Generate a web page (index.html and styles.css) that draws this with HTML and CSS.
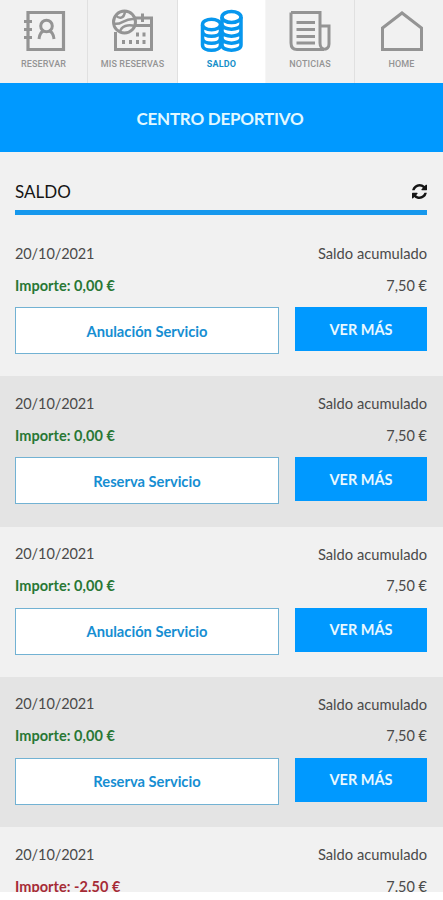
FILE: index.html
```html
<!DOCTYPE html>
<html lang="es">
<head>
<meta charset="utf-8">
<title>Saldo</title>
<link rel="stylesheet" href="styles.css">
</head>
<body>
<div class="screen">
  <nav class="tabs">
    <a class="tab">
      <svg class="icon" viewBox="0 0 44 44"><path d="M6 3.500H41.500V40.500H6Z" stroke-width="3.200"/><path d="M2 12.500H10M2 20.500H10M2 28.500H10" stroke-width="3"/><circle cx="24.500" cy="17" r="5.800" stroke-width="3"/><path d="M17 30C17.500 25 19.500 22.500 22 21.500M32 30C31.500 25 29.500 22.500 27 21.500" stroke-width="3"/></svg>
      <span class="label">RESERVAR</span>
    </a>
    <a class="tab">
      <svg class="icon" viewBox="0 0 44 44"><path d="M24 9H40.500V40.500H4.500V23M23 16.500H40M31.500 4.500V13" stroke-width="3"/><circle cx="13.500" cy="13" r="11" stroke-width="3"/><path d="M3 14.500C10 17 13 9 23 10M5 6.500C8 10 13 10 14 2.500M9 23C10 17 17 15 24 17" stroke-width="2.500"/><path d="M25 25.500H28M31.500 25.500H34.500M11 33H14M18 33H21M25 33H28M31.500 33H34.500" stroke-width="4"/></svg>
      <span class="label">MIS RESERVAS</span>
    </a>
    <a class="tab active">
      <svg class="icon" viewBox="0 0 44 44"><path d="M2.500 16V36C2.500 43 20.500 43 20.500 36M2.500 22C2.500 29 20.500 29 20.500 22M2.500 29C2.500 36 20.500 36 20.500 29M22 8V36C22 43 41 43 41 36V8M22 15C22 22 41 22 41 15M22 22C22 29 41 29 41 22M22 29C22 36 41 36 41 29M20.500 16V37" stroke-width="3.500"/><ellipse cx="11.500" cy="15.500" rx="9" ry="5.300" stroke-width="3.500"/><ellipse cx="31.500" cy="8" rx="9.500" ry="5.500" stroke-width="3.500"/></svg>
      <span class="label">SALDO</span>
    </a>
    <a class="tab">
      <svg class="icon" viewBox="0 0 44 44"><path d="M3 3.500H32V34C32 42 41 42 41 35V17H32M3 3.500V34C3 38 5 40.500 9 40.500H36" stroke-width="3"/><path d="M8.500 13.500H27M8.500 20.500H27M8.500 27.500H27M8.500 34H27" stroke-width="2.800"/></svg>
      <span class="label">NOTICIAS</span>
    </a>
    <a class="tab">
      <svg class="icon" viewBox="0 0 44 44"><path d="M2.500 19L22 4L41.500 19V40.500H2.500Z" stroke-width="3"/></svg>
      <span class="label">HOME</span>
    </a>
  </nav>
  <header class="banner"><h1>CENTRO DEPORTIVO</h1></header>
  <section class="heading">
    <h2>SALDO</h2>
    <svg class="refresh" viewBox="0 0 1536 1536"><path d="M1511 928q0 5-1 7-64 268-268 434.500T764 1536q-146 0-282.500-55T238 1324l-129 129q-19 19-45 19t-45-19-19-45V960q0-26 19-45t45-19h448q26 0 45 19t19 45-19 45l-137 137q71 66 161 102t187 36q134 0 250-65t186-179q11-17 53-117 8-23 30-23h192q13 0 22.500 9.500t9.500 22.500zm25-800v448q0 26-19 45t-45 19h-448q-26 0-45-19t-19-45 19-45l138-138Q969 256 768 256q-134 0-250 65T332 500q-11 17-53 117-8 23-30 23H50q-13 0-22.500-9.500T18 608v-7q65-268 270-434.500T768 0q146 0 284 55.500T1297 212l130-129q19-19 45-19t45 19 19 45z"/></svg>
  </section>
  <main class="list">
    <article class="entry">
      <div class="line"><span class="date">20/10/2021</span><span class="caption">Saldo acumulado</span></div>
      <div class="line"><b class="amount">Importe: 0,00 €</b><span class="total">7,50 €</span></div>
      <div class="actions"><a class="service">Anulación Servicio</a><a class="more">VER MÁS</a></div>
    </article>
    <article class="entry">
      <div class="line"><span class="date">20/10/2021</span><span class="caption">Saldo acumulado</span></div>
      <div class="line"><b class="amount">Importe: 0,00 €</b><span class="total">7,50 €</span></div>
      <div class="actions"><a class="service">Reserva Servicio</a><a class="more">VER MÁS</a></div>
    </article>
    <article class="entry">
      <div class="line"><span class="date">20/10/2021</span><span class="caption">Saldo acumulado</span></div>
      <div class="line"><b class="amount">Importe: 0,00 €</b><span class="total">7,50 €</span></div>
      <div class="actions"><a class="service">Anulación Servicio</a><a class="more">VER MÁS</a></div>
    </article>
    <article class="entry">
      <div class="line"><span class="date">20/10/2021</span><span class="caption">Saldo acumulado</span></div>
      <div class="line"><b class="amount">Importe: 0,00 €</b><span class="total">7,50 €</span></div>
      <div class="actions"><a class="service">Reserva Servicio</a><a class="more">VER MÁS</a></div>
    </article>
    <article class="entry">
      <div class="line"><span class="date">20/10/2021</span><span class="caption">Saldo acumulado</span></div>
      <div class="line"><b class="amount negative">Importe: -2.50 €</b><span class="total">7.50 €</span></div>
    </article>
  </main>
</div>
</body>
</html>
```
FILE: styles.css
```css
* { box-sizing: border-box; }
body { margin: 0; background: #fff; font-family: Lato, sans-serif; color: #4a4a4a; }
h1, h2 { margin: 0; }
.screen { height: 892px; overflow: hidden; background: #f1f1f1; display: flex; flex-direction: column; }
.tabs { flex: none; height: 83px; display: grid; grid-template-columns: 88px 90px 88px 89px 88px; }
.tab { display: flex; flex-direction: column; align-items: center; padding-top: 9px; border-right: 1px solid #e0e0e0; color: #949494; }
.tab:last-child { border-right: 0; padding-left: 5px; }
.tab.active { background: #fff; color: #0797ee; border-right-color: #f6f6f6; }
.icon { width: 44px; height: 44px; fill: none; stroke: currentColor; }
.label { font: 500 9px/12px Roboto, sans-serif; letter-spacing: 0.15px; margin-top: 5px; white-space: nowrap; }
.active .label { font-weight: 700; color: #168fc9; }
.banner { flex: none; height: 69px; background: #0099ff; display: flex; align-items: center; justify-content: center; padding: 2px 3px 0 0; }
.banner h1 { font: 700 17px/24px "Open Sans", Lato, sans-serif; letter-spacing: -0.25px; color: #e2f8ff; }
.banner h1 { font-family: Lato, sans-serif; }
.heading { flex: none; margin: 0 16px 0 15px; height: 63px; padding-top: 21px; border-bottom: 5px solid #1698ed; display: flex; align-items: center; justify-content: space-between; }
.heading h2 { font-size: 17px; line-height: 24px; font-weight: 400; color: #151515; }
.refresh { width: 15px; height: 15px; fill: #151515; }
.list { padding-top: 11px; }
.entry { height: 150.3px; padding: 11px 16px 0 15px; }
.entry:nth-child(even) { background: #e4e4e4; }
.line { height: 32px; display: flex; align-items: center; justify-content: space-between; font-size: 15px; white-space: nowrap; }
.date { font-size: 14.5px; letter-spacing: -0.1px; }
.caption { font-size: 14.7px; }
.total { font-size: 14.5px; }
.amount { color: #287735; font-size: 14.5px; letter-spacing: 0.05px; }
.amount.negative { color: #a62b36; }
.actions { display: flex; justify-content: space-between; margin-top: 6px; font-weight: 700; }
.service { width: 264px; height: 47px; display: flex; align-items: center; justify-content: center; background: #fff; border: 1px solid #72b2d3; color: #168ed2; font-size: 14.7px; }
.more { width: 132px; height: 44px; display: flex; align-items: center; justify-content: center; background: #0099ff; color: #e8f8ff; font-size: 14.5px; }
```
